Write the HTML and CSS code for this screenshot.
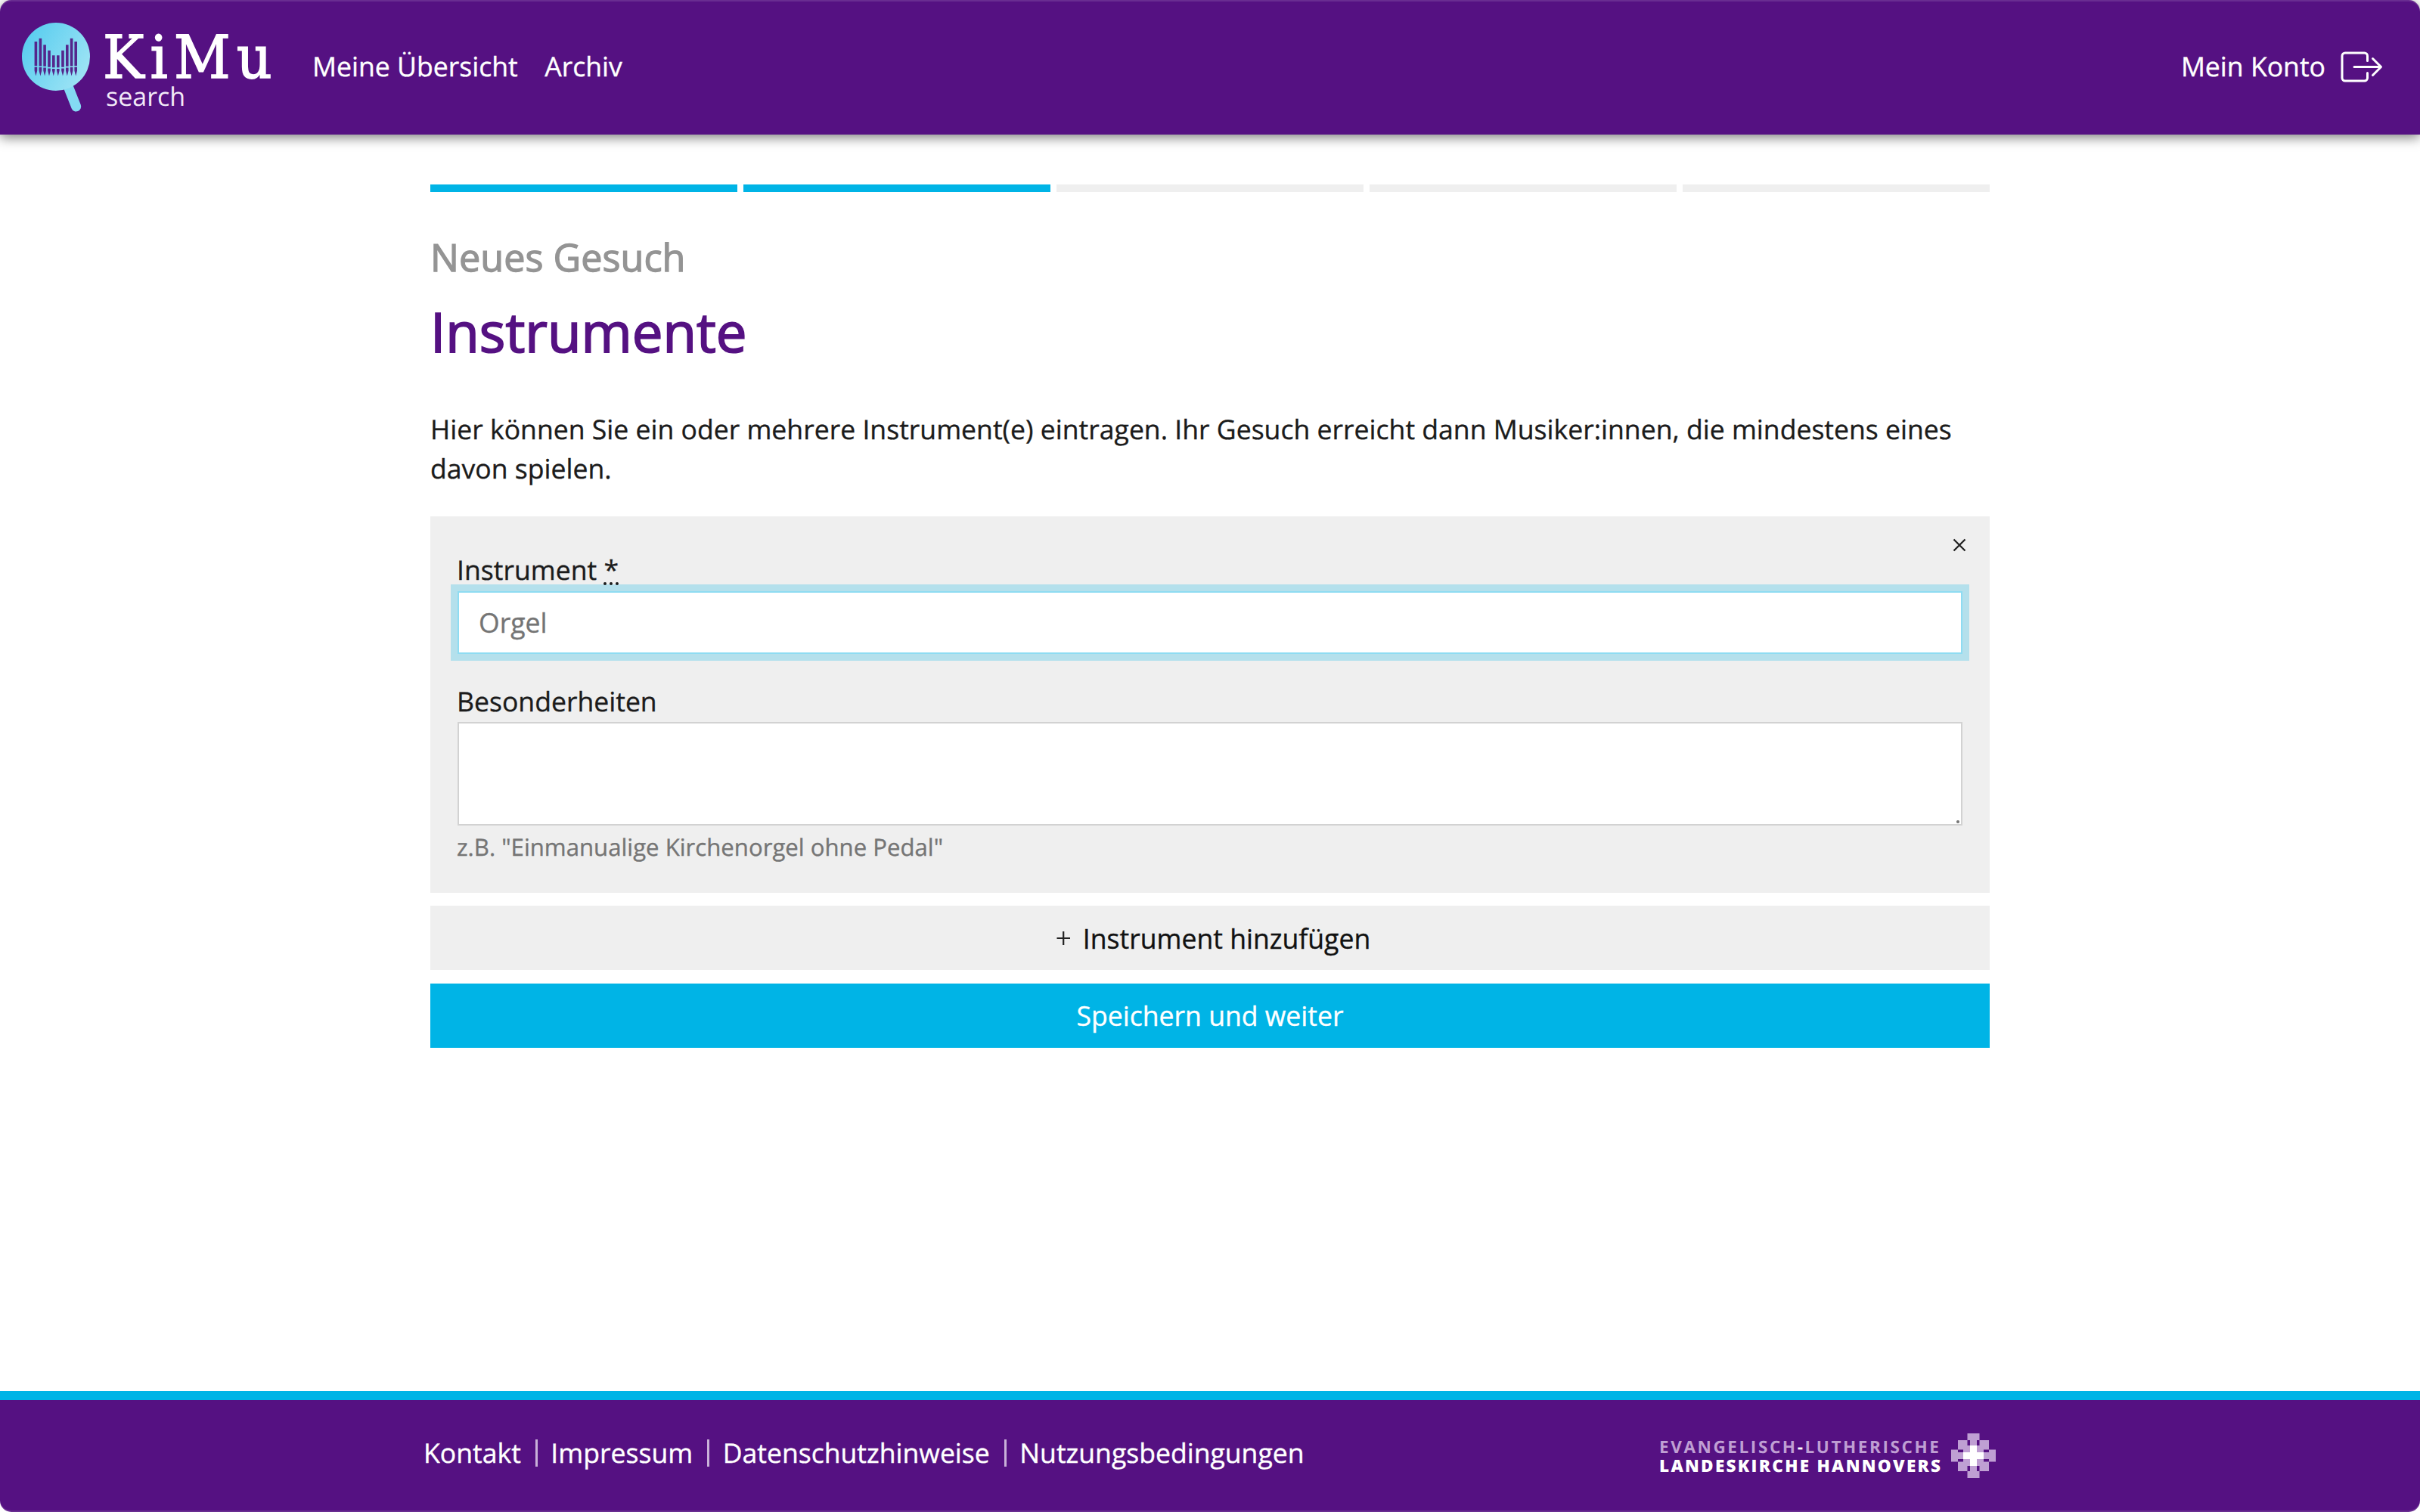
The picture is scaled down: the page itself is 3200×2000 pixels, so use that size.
FILE: index.html
```
<!DOCTYPE html>
<html lang="de">
<head>
<meta charset="utf-8">
<title>KiMu search – Neues Gesuch</title>
<link rel="stylesheet" href="styles.css">
</head>
<body>
<header class="header">
  <svg class="logo" width="400" height="178" viewBox="0 0 400 178" role="img" aria-label="KiMu search">
    <defs>
      <linearGradient id="lens" x1="0" y1="0.2" x2="1" y2="0.8">
        <stop offset="0" stop-color="#56ccef"/>
        <stop offset="1" stop-color="#a2e5f5"/>
      </linearGradient>
    </defs>
    <path d="M90 114L100.700 141" stroke="#84dbf3" stroke-width="13" stroke-linecap="round"/>
    <circle cx="74" cy="75" r="45" fill="url(#lens)"/>
    <g fill="#54268c">
      <path d="M45.600 55h3.600v32h-3.600zM51.600 50.700h3.600v36.700h-3.600zM57.300 59.300h3.600v28.500h-3.600zM63.200 66.700h3.600v22h-3.600zM69 73.300h3.600v16h-3.600zM75 73.300h3.600v16h-3.600zM81.200 66.700h3.600v22h-3.600zM87 59.300h3.600v28.500h-3.600zM92.800 50.700h3.600v36.700h-3.600zM98.400 55h3.600v32h-3.600z"/>
      <path d="M45.600 88.500h3.600v5l-1.800 7-1.800-7zM51.600 89h3.600v4.500l-1.800 7-1.800-7zM57.300 89.500h3.600v4l-1.800 7-1.800-7zM63.200 90.500h3.600v3l-1.800 7-1.800-7zM69 91h3.600v2.500l-1.800 7-1.800-7zM75 91h3.600v2.500l-1.800 7-1.800-7zM81.200 90.500h3.600v3l-1.800 7-1.800-7zM87 89.500h3.600v4l-1.800 7-1.800-7zM92.800 89h3.600v4.500l-1.800 7-1.800-7zM98.400 88.500h3.600v5l-1.800 7-1.800-7z"/>
    </g>
    <text class="logo-name" transform="translate(136 102.800) scale(.93 1)">KiMu</text>
    <text class="logo-sub" x="140" y="139.500">search</text>
  </svg>
  <nav class="nav">
    <a>Meine Übersicht</a>
    <a>Archiv</a>
  </nav>
  <div class="account">
    <a>Mein Konto</a>
    <svg width="56" height="44" viewBox="0 0 56 44" fill="none" stroke="#fff" stroke-width="3" stroke-linecap="round" stroke-linejoin="round">
      <path d="M35.500 14.500V8a4 4 0 0 0-4-4H6a4 4 0 0 0-4 4v29a4 4 0 0 0 4 4h25.500a4 4 0 0 0 4-4v-6.500M18 22.500h34.500M42.500 11.500l11 11-11 11"/>
    </svg>
  </div>
</header>

<main class="main">
  <div class="progress">
    <span class="step done"></span><span class="step done"></span><span class="step"></span><span class="step"></span><span class="step"></span>
  </div>
  <h2 class="kicker">Neues Gesuch</h2>
  <h1 class="title">Instrumente</h1>
  <p class="intro">Hier können Sie ein oder mehrere Instrument(e) eintragen. Ihr Gesuch erreicht dann Musiker:innen, die mindestens eines davon spielen.</p>

  <form class="form">
    <section class="card">
      <svg class="close" width="36" height="36" viewBox="0 0 36 36"><path d="M10.500 10.500l15 15M25.500 10.500l-15 15" stroke="#222" stroke-width="2.300"/></svg>
      <label class="label" for="instrument">Instrument <span class="required">*</span></label>
      <input class="input" id="instrument" type="text" placeholder="Orgel">
      <label class="label second" for="details">Besonderheiten</label>
      <textarea class="textarea" id="details"></textarea>
      <p class="hint">z.B. "Einmanualige Kirchenorgel ohne Pedal"</p>
    </section>
    <button class="button add" type="button">
      <svg width="36" height="36" viewBox="0 0 36 36"><path d="M9.500 18h17.500M18.200 9v18" stroke="#222" stroke-width="2.200"/></svg>
      <span>Instrument hinzufügen</span>
    </button>
    <button class="button save" type="button">Speichern und weiter</button>
  </form>
</main>

<footer class="footer">
  <ul class="links">
    <li>Kontakt</li>
    <li>Impressum</li>
    <li>Datenschutzhinweise</li>
    <li>Nutzungsbedingungen</li>
  </ul>
  <svg class="church" width="446" height="60" viewBox="0 0 446 60">
    <text class="church-top" x="0" y="26">EVANGELISCH<tspan fill="#fff">-</tspan>LUTHERISCHE</text>
    <text class="church-bottom" x="0" y="50.500">LANDESKIRCHE HANNOVERS</text>
    <g transform="translate(415.500 29.500)">
      <path fill="#bf9fd3" d="M-8-29.500H8v9H20.500V-8h9V8h-9V20.500H8v9H-8v-9H-20.500V8h-9V-8h9V-20.500H-8z"/>
      <path fill="#551182" d="M-8-20.500h3.500v7H-8zM4.500-20.500H8v7H4.500zM-8 13.500h3.500v7H-8zM4.500 13.500H8v7H4.500zM-20.500-8h7v3.500h-7zM-20.500 4.500h7V8h-7zM13.500-8h7v3.500h-7zM13.500 4.500h7V8h-7z"/>
      <path fill="#fff" d="M-4.500-13.500h9v9h9v9h-9v9h-9v-9h-9v-9h9z"/>
    </g>
  </svg>
</footer>
</body>
</html>
```
FILE: styles.css
```
* {
  box-sizing: border-box;
}

html {
  background: #fff;
}

body {
  margin: 0;
  height: 2000px;
  display: flex;
  flex-direction: column;
  background: #fff;
  color: #1b1b1b;
  font: 35.6px/52.3px "Open Sans", sans-serif;
  text-rendering: geometricPrecision;
  -webkit-text-stroke-width: 0.35px;
}

.header {
  height: 178px;
  display: flex;
  align-items: center;
  background: #551182;
  color: #fff;
  border-radius: 15px 15px 0 0;
  box-shadow: 0 4px 16px rgba(0, 0, 0, 0.5), inset 0 2px 0 rgba(255, 255, 255, 0.12);
  padding-right: 49px;
}

.logo-name {
  font: 78.5px "DejaVu Serif", serif;
  letter-spacing: 8.6px;
  fill: #fff;
  stroke: #fff;
  stroke-width: 1.6px;
}

.logo-sub {
  font: 34px "Open Sans", sans-serif;
  fill: #f3eaf8;
  -webkit-text-stroke-width: 0;
}

.nav {
  display: flex;
  gap: 35.5px;
  margin-left: 13px;
  padding-bottom: 1px;
}

.account {
  display: flex;
  align-items: center;
  gap: 20px;
  margin-left: auto;
  padding-bottom: 1px;
}

.main {
  flex: 1;
  width: 2062px;
  margin: 0 auto;
  padding-top: 66px;
}

.progress {
  display: grid;
  grid-template-columns: repeat(5, 1fr);
  gap: 8.6px;
}

.step {
  height: 9.5px;
  background: #efefef;
}

.step.done {
  background: #00b4e6;
}

.kicker {
  margin: 52px 0 21px;
  font-size: 50.4px;
  line-height: 68px;
  font-weight: 500;
  color: #949494;
  -webkit-text-stroke-width: 1.3px;
}

.title {
  margin: 0 0 59.2px;
  font-size: 72.6px;
  line-height: 88px;
  font-weight: 500;
  color: #551182;
  -webkit-text-stroke-width: 1.8px;
}

.intro {
  margin: 0 0 37px;
}

.card {
  position: relative;
  background: #efefef;
  padding: 53px 36px 42px;
}

.close {
  position: absolute;
  top: 20px;
  right: 22px;
}

.label {
  display: block;
  margin-left: -1px;
  line-height: 36px;
}

.label.second {
  margin-top: 45px;
}

.required {
  text-decoration: underline dotted 3.5px;
  text-underline-offset: 2.5px;
  text-decoration-skip-ink: none;
}

.input,
.textarea {
  display: block;
  width: 100%;
  border: 2px solid #d2d2d2;
  border-radius: 0;
  background: #fff;
  font: inherit;
  outline: none;
}

.input {
  height: 83.5px;
  margin-top: 9.5px;
  padding: 0 26px 1px;
  border-color: #8edcf2;
  box-shadow: 0 0 0 9px #b4e0ec;
}

.input::placeholder {
  color: #757575;
  opacity: 1;
}

.textarea {
  height: 137px;
  margin-top: 8.5px;
  resize: none;
  background: #fff radial-gradient(circle at 1982px 130px, #777 1.5px, transparent 2.5px);
}

.hint {
  margin: 11px 0 0 -1px;
  font-size: 31.15px;
  line-height: 36px;
  color: #757575;
}

.button {
  display: flex;
  align-items: center;
  justify-content: center;
  gap: 8px;
  width: 100%;
  height: 85px;
  margin-top: 17.5px;
  padding: 0;
  border: 0;
  font: inherit;
}

.add {
  background: #efefef;
  color: #111;
  padding-top: 1px;
}

.save {
  background: #00b4e6;
  color: #fff;
}

.footer {
  height: 160px;
  display: flex;
  justify-content: space-between;
  align-items: flex-start;
  padding: 44px 560px 0 560px;
  border-top: 12px solid #00b4e6;
  background: #551182;
  color: #fff;
  border-radius: 0 0 15px 15px;
  box-shadow: inset 0 -2px 0 rgba(255, 255, 255, 0.12);
}

.links {
  display: flex;
  margin: 8px 0 0;
  padding: 0;
  list-style: none;
  line-height: 36px;
}

.links li + li {
  margin-left: 19.3px;
  padding-left: 17.2px;
  border-left: 3px solid #c9b1d9;
}

.church {
  -webkit-text-stroke-width: 0;
}

.church-top,
.church-bottom {
  font: 700 22.5px "Open Sans", sans-serif;
  letter-spacing: 2.6px;
  fill: #bf9fd3;
}

.church-bottom {
  font-weight: 800;
  letter-spacing: 2.3px;
  fill: #fff;
}
```
